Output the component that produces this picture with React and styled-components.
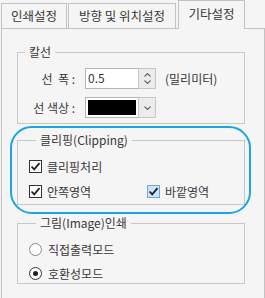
import React from "react";
import styled, { createGlobalStyle } from "styled-components";

const GlobalStyle = createGlobalStyle`
  html, body {
    margin: 0;
    padding: 0;
    overflow: hidden;
    background: #f5f5f5;
  }
  body {
    font-family: "Noto Sans CJK KR", "Noto Sans", sans-serif;
    font-size: 12px;
    color: #383838;
  }
`;

const Page = styled.div`
  padding-left: 1px;
  width: 264px;
`;

const Tabs = styled.div`
  display: flex;
  align-items: flex-end;
  gap: 1px;
  height: 28px;
  position: relative;
  z-index: 1;
`;

const Tab = styled.div`
  box-sizing: border-box;
  height: ${p => (p.$active ? "29px" : "25px")};
  margin-bottom: ${p => (p.$active ? "-1px" : "0")};
  margin-left: ${p => (p.$active ? "1px" : "0")};
  width: ${p => p.$w}px;
  border: 1px solid #c3c3c3;
  border-bottom: none;
  background: #f5f5f5;
  font-size: 12.5px;
  line-height: ${p => (p.$active ? "26px" : "23px")};
  text-align: center;
  white-space: nowrap;
  color: #383838;
`;

const Panel = styled.div`
  box-sizing: border-box;
  width: 264px;
  height: 270px;
  border: 1px solid #c3c3c3;
  border-bottom: none;
  padding: 15px 0 0 15px;
  display: flex;
  flex-direction: column;
`;

const Group = styled.fieldset`
  box-sizing: border-box;
  width: 228px;
  margin: ${p => p.$mt || 0}px 0 0 0;
  padding: ${p => p.$pad};
  border: 1px solid #c8c8c8;
  display: flex;
  flex-direction: column;
  gap: ${p => p.$gap || 0}px;
`;

const Legend = styled.legend`
  margin-left: 7px;
  padding: 0 4px;
  line-height: 16px;
  font-size: 12px;
  color: #383838;
`;

const FieldRow = styled.div`
  display: flex;
  align-items: center;
  height: 21px;
`;

const FieldLabel = styled.span`
  width: 57px;
  text-align: right;
  margin-right: 10px;
  white-space: pre;
`;

const Control = styled.div`
  display: flex;
  height: 21px;
`;

const TextBox = styled.div`
  box-sizing: border-box;
  width: 54px;
  height: 21px;
  border: 1px solid #b4b4b4;
  background: #fff;
  padding-left: 2px;
  line-height: 18px;
`;

const ColorBox = styled.div`
  box-sizing: border-box;
  width: 54px;
  height: 21px;
  border: 1px solid #b4b4b4;
  background: #fff;
  padding: 2px;
`;

const Swatch = styled.div`
  height: 100%;
  background: #000;
`;

const SideButton = styled.div`
  box-sizing: border-box;
  width: 18px;
  height: 21px;
  margin-left: -1px;
  border: 1px solid #c6c6c6;
  background: #ececec;
  display: flex;
  flex-direction: column;
  align-items: center;
  justify-content: center;
  gap: ${p => p.$gap || 0}px;
`;

const Unit = styled.span`
  margin-left: 9px;
`;

const Highlight = styled.div`
  position: relative;
  margin-top: 8px;
  &::after {
    content: "";
    position: absolute;
    top: -6px;
    left: -7px;
    width: 241px;
    height: 88px;
    box-sizing: border-box;
    border: 2px solid #18a5e6;
    border-radius: 22px;
    pointer-events: none;
  }
`;

const CheckGrid = styled.div`
  display: grid;
  grid-template-columns: 118px 1fr;
  row-gap: 5px;
`;

const Option = styled.label`
  display: flex;
  align-items: center;
  height: ${p => p.$h || 20}px;
  grid-column: ${p => (p.$full ? "1 / span 2" : "auto")};
`;

const Box = styled.span`
  box-sizing: border-box;
  width: 13px;
  height: 13px;
  border: 1px solid ${p => (p.$hover ? "#6fa8dc" : "#333")};
  background: ${p => (p.$hover ? "#cce4f7" : "#fff")};
  margin-right: 5px;
  display: flex;
  align-items: center;
  justify-content: center;
`;

const Radio = styled.span`
  box-sizing: border-box;
  width: 13px;
  height: 13px;
  border-radius: 50%;
  border: 1px solid ${p => (p.$on ? "#333" : "#888")};
  background: #fff;
  margin-right: 6px;
  display: flex;
  align-items: center;
  justify-content: center;
`;

const Dot = styled.span`
  width: 5px;
  height: 5px;
  border-radius: 50%;
  background: #222;
`;

const Check = () => (
  <svg width="11" height="11" viewBox="0 0 11 11">
    <path d="M1.5 5.5 L4.2 8.3 L9.5 2.2" fill="none" stroke="#222" strokeWidth="1.8" />
  </svg>
);

const Caret = ({ up }) => (
  <svg width="7" height="4" viewBox="0 0 7 4">
    <path d={up ? "M0.5 3.5 L3.5 0.5 L6.5 3.5" : "M0.5 0.5 L3.5 3.5 L6.5 0.5"} fill="none" stroke="#666" strokeWidth="1.1" />
  </svg>
);

export default function App() {
  return (
    <Page>
      <GlobalStyle />
      <Tabs>
        <Tab $w={66}>인쇄설정</Tab>
        <Tab $w={108}>방향 및 위치설정</Tab>
        <Tab $w={67} $active>기타설정</Tab>
      </Tabs>
      <Panel>
        <Group $pad="8px 0 5px 0" $gap={8}>
          <Legend>칼선</Legend>
          <FieldRow>
            <FieldLabel>선  폭 :</FieldLabel>
            <Control>
              <TextBox>0.5</TextBox>
              <SideButton $gap={3}>
                <Caret up />
                <Caret />
              </SideButton>
            </Control>
            <Unit>(밀리미터)</Unit>
          </FieldRow>
          <FieldRow>
            <FieldLabel>선 색상 :</FieldLabel>
            <Control>
              <ColorBox>
                <Swatch />
              </ColorBox>
              <SideButton>
                <Caret />
              </SideButton>
            </Control>
          </FieldRow>
        </Group>

        <Highlight>
          <Group $pad="8px 0 3px 11px">
            <Legend>클리핑(Clipping)</Legend>
            <CheckGrid>
              <Option $full>
                <Box><Check /></Box>클리핑처리
              </Option>
              <Option>
                <Box><Check /></Box>안쪽영역
              </Option>
              <Option>
                <Box $hover><Check /></Box>바깥영역
              </Option>
            </CheckGrid>
          </Group>
        </Highlight>

        <Group $mt={10} $pad="9px 0 1px 11px" $gap={6}>
          <Legend>그림(Image)인쇄</Legend>
          <Option $h={18}>
            <Radio />직접출력모드
          </Option>
          <Option $h={18}>
            <Radio $on><Dot /></Radio>호환성모드
          </Option>
        </Group>
      </Panel>
    </Page>
  );
}
